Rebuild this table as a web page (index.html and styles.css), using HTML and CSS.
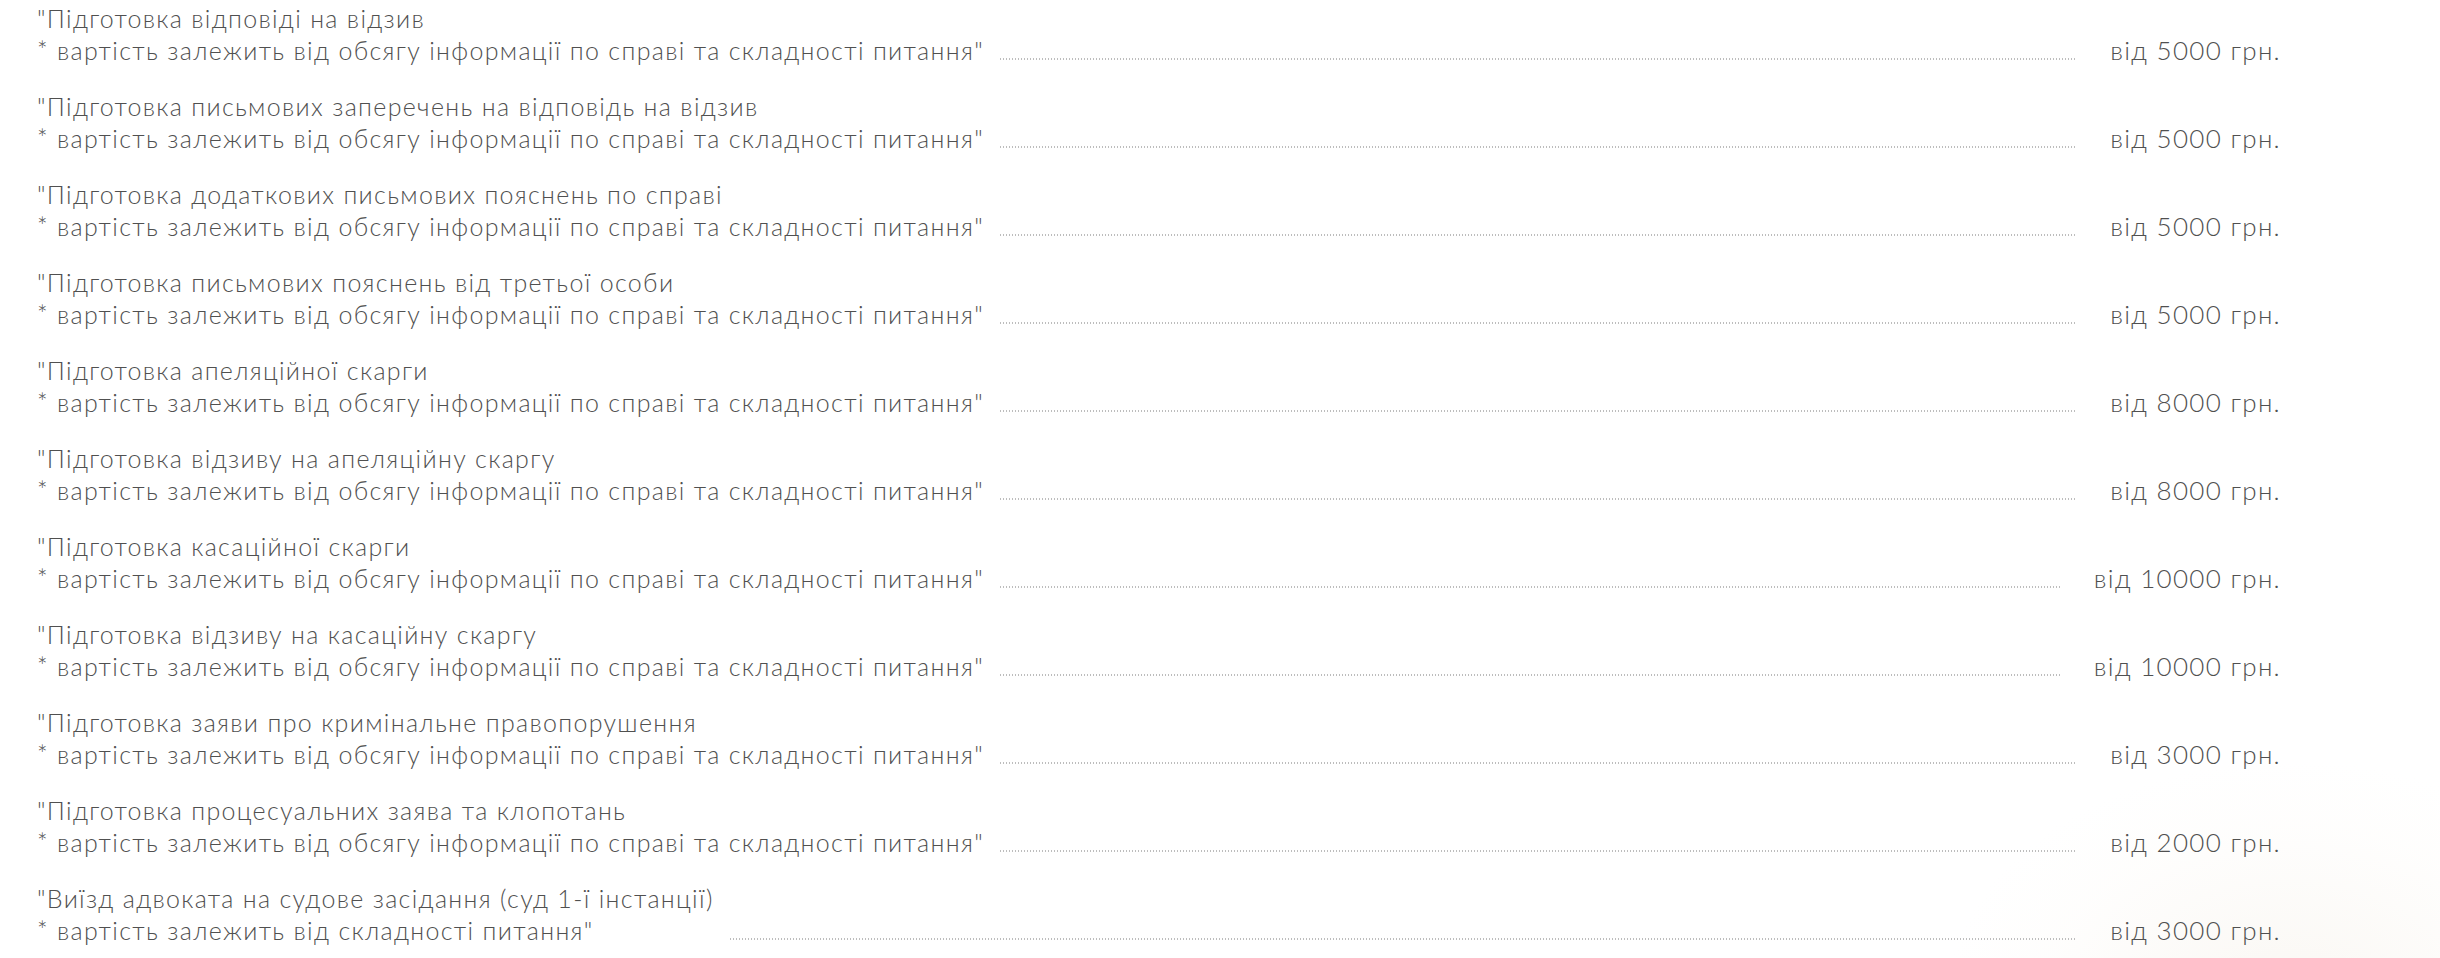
FILE: index.html
```html
<!DOCTYPE html>
<html lang="uk">
<head>
<meta charset="utf-8">
<title>Ціни</title>
<link rel="stylesheet" href="styles.css">
</head>
<body>
<div class="page">
  <ul class="prices">
    <li class="row">
      <p class="desc">"Підготовка відповіді на відзив<br>* вартість залежить від обсягу інформації по справі та складності питання"</p>
      <span class="dots"></span>
      <span class="price">від 5000 грн.</span>
    </li>
    <li class="row">
      <p class="desc">"Підготовка письмових заперечень на відповідь на відзив<br>* вартість залежить від обсягу інформації по справі та складності питання"</p>
      <span class="dots"></span>
      <span class="price">від 5000 грн.</span>
    </li>
    <li class="row">
      <p class="desc">"Підготовка додаткових письмових пояснень по справі<br>* вартість залежить від обсягу інформації по справі та складності питання"</p>
      <span class="dots"></span>
      <span class="price">від 5000 грн.</span>
    </li>
    <li class="row">
      <p class="desc">"Підготовка письмових пояснень від третьої особи<br>* вартість залежить від обсягу інформації по справі та складності питання"</p>
      <span class="dots"></span>
      <span class="price">від 5000 грн.</span>
    </li>
    <li class="row">
      <p class="desc">"Підготовка апеляційної скарги<br>* вартість залежить від обсягу інформації по справі та складності питання"</p>
      <span class="dots"></span>
      <span class="price">від 8000 грн.</span>
    </li>
    <li class="row">
      <p class="desc">"Підготовка відзиву на апеляційну скаргу<br>* вартість залежить від обсягу інформації по справі та складності питання"</p>
      <span class="dots"></span>
      <span class="price">від 8000 грн.</span>
    </li>
    <li class="row">
      <p class="desc">"Підготовка касаційної скарги<br>* вартість залежить від обсягу інформації по справі та складності питання"</p>
      <span class="dots"></span>
      <span class="price">від 10000 грн.</span>
    </li>
    <li class="row">
      <p class="desc">"Підготовка відзиву на касаційну скаргу<br>* вартість залежить від обсягу інформації по справі та складності питання"</p>
      <span class="dots"></span>
      <span class="price">від 10000 грн.</span>
    </li>
    <li class="row">
      <p class="desc">"Підготовка заяви про кримінальне правопорушення<br>* вартість залежить від обсягу інформації по справі та складності питання"</p>
      <span class="dots"></span>
      <span class="price">від 3000 грн.</span>
    </li>
    <li class="row">
      <p class="desc">"Підготовка процесуальних заява та клопотань<br>* вартість залежить від обсягу інформації по справі та складності питання"</p>
      <span class="dots"></span>
      <span class="price">від 2000 грн.</span>
    </li>
    <li class="row">
      <p class="desc">"Виїзд адвоката на судове засідання (суд 1-ї інстанції)<br>* вартість залежить від складності питання"</p>
      <span class="dots"></span>
      <span class="price">від 3000 грн.</span>
    </li>
  </ul>
</div>
</body>
</html>
```

FILE: styles.css
```css
html, body {
  margin: 0;
  padding: 0;
  background: #ffffff;
}

.page {
  position: relative;
  width: 2440px;
  height: 958px;
  overflow: hidden;
  font-family: "Lato", "Noto Sans", sans-serif;
  font-weight: 300;
  color: #505050;
}

.page::after {
  content: "";
  position: absolute;
  z-index: 0;
  right: -200px;
  bottom: -300px;
  width: 700px;
  height: 500px;
  border-radius: 50%;
  background: radial-gradient(ellipse at center, rgba(240, 232, 220, 0.35) 0%, rgba(250, 246, 240, 0.15) 50%, rgba(255, 255, 255, 0) 70%);
  pointer-events: none;
}

.prices {
  position: relative;
  z-index: 1;
  list-style: none;
  margin: 0;
  padding: 2px 159px 0 37px;
  display: flex;
  flex-direction: column;
  gap: 24px;
}

.row {
  display: flex;
  align-items: flex-end;
}

.desc {
  margin: 0;
  font-size: 25px;
  line-height: 32px;
  letter-spacing: 1.32px;
  white-space: nowrap;
}

.dots {
  flex: 1;
  height: 2px;
  margin: 0 34px 6px 16px;
  background-image: linear-gradient(to right, #bdbdbd 50%, rgba(255, 255, 255, 0) 50%);
  background-size: 3px 2px;
  background-repeat: repeat-x;
}

.price {
  font-size: 26px;
  line-height: 32px;
  letter-spacing: 1.3px;
  white-space: nowrap;
  color: #505050;
}
```
